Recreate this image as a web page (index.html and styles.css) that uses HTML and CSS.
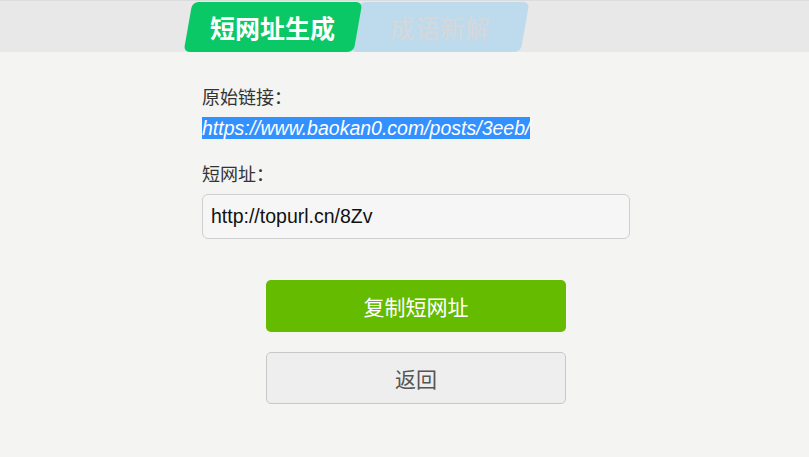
FILE: index.html
```html
<!DOCTYPE html>
<html lang="zh-CN">
<head>
<meta charset="utf-8">
<title>短网址生成</title>
<link rel="stylesheet" href="styles.css">
</head>
<body>
<header class="topbar">
  <nav class="tabs">
    <a class="tab tab-active"><span class="tab-text">短网址生成</span></a>
    <a class="tab tab-idle"><span class="tab-text">成语新解</span></a>
  </nav>
</header>
<main class="content">
  <div class="label">原始链接：</div>
  <div class="orig"><span class="sel">https://www.baokan0.com/posts/3eeb/</span></div>
  <div class="label label-short">短网址：</div>
  <div class="field">http://topurl.cn/8Zv</div>
  <div class="actions">
    <button class="btn btn-primary">复制短网址</button>
    <button class="btn btn-default">返回</button>
  </div>
</main>
</body>
</html>
```
FILE: styles.css
```css
html, body {
  margin: 0;
  padding: 0;
}
body {
  background: #f4f4f2;
  font-family: "Liberation Sans", "Noto Sans CJK SC", Arial, sans-serif;
  color: #333;
  width: 809px;
  height: 457px;
  overflow: hidden;
}
.topbar {
  height: 52px;
  box-sizing: border-box;
  border-top: 1px solid #dcdcdc;
  background: #e8e8e8;
}
.tabs {
  display: flex;
  padding-left: 188px;
  padding-top: 1px;
  height: 51px;
  box-sizing: border-box;
}
.tab {
  width: 170px;
  height: 50px;
  display: flex;
  align-items: center;
  justify-content: center;
  transform: skewX(-10deg);
  border-radius: 6px;
  text-decoration: none;
}
.tab-text {
  transform: skewX(10deg);
  font-family: "Noto Sans CJK SC", sans-serif;
  font-size: 25px;
  line-height: 30px;
}
.tab-active {
  background: #0bc867;
  position: relative;
  z-index: 1;
}
.tab-active .tab-text {
  color: #fff;
  font-weight: 700;
}
.tab-idle {
  margin-left: -3px;
  background: #bedbee;
}
.tab-idle .tab-text {
  color: #d5d8da;
  font-weight: 400;
}
.content {
  margin-left: 202px;
  width: 428px;
  padding-top: 31px;
}
.label {
  font-family: "Noto Sans CJK SC", sans-serif;
  font-size: 18px;
  line-height: 26px;
  color: #333;
}
.orig {
  margin-top: 8px;
  font-size: 19.5px;
  line-height: 22px;
  font-style: italic;
}
.sel {
  background: #3390ff;
  color: #fff;
}
.label-short {
  margin-top: 21px;
}
.field {
  margin-top: 8px;
  height: 45px;
  box-sizing: border-box;
  border: 1px solid #cfcfcf;
  border-radius: 6px;
  background: #f6f6f6;
  padding: 0 8px;
  font-size: 19.5px;
  line-height: 43px;
  color: #111;
}
.actions {
  display: flex;
  flex-direction: column;
  align-items: flex-start;
  gap: 20px;
  margin-top: 41px;
  padding-left: 64px;
}
.btn {
  width: 300px;
  height: 52px;
  border-radius: 5px;
  font-family: "Noto Sans CJK SC", sans-serif;
  font-size: 21px;
  cursor: pointer;
  padding: 0;
}
.btn-primary {
  background: #64bb00;
  border: none;
  color: #fff;
}
.btn-default {
  background: #eeeeee;
  border: 1px solid #c8c8c8;
  color: #555;
}
```
